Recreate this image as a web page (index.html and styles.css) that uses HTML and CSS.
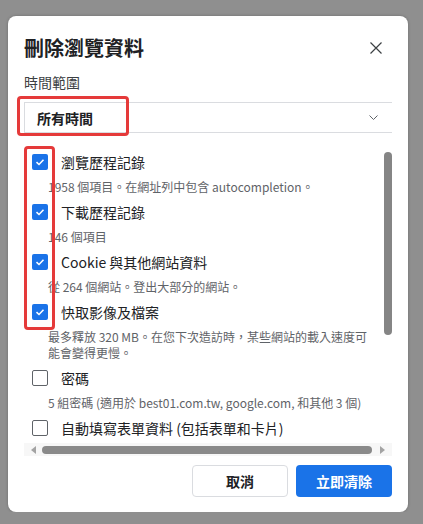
FILE: index.html
```html
<!DOCTYPE html>
<html lang="zh-Hant">
<head>
<meta charset="utf-8">
<link rel="stylesheet" href="styles.css">
</head>
<body>
<div class="dialog">
  <div class="header">
    <h1 class="title">刪除瀏覽資料</h1>
    <button class="close" aria-label="關閉">
      <svg width="12" height="12" viewBox="0 0 12 12"><path d="M0.5 0.5 L11.5 11.5 M11.5 0.5 L0.5 11.5" stroke="#3c4043" stroke-width="1.2" fill="none"/></svg>
    </button>
  </div>
  <div class="field-label">時間範圍</div>
  <div class="select-wrap">
    <div class="select">
      <span class="select-value">所有時間</span>
      <svg class="chevron" width="9" height="5" viewBox="0 0 9 5"><path d="M0.5 0.5 L4.5 4.5 L8.5 0.5" stroke="#5f6368" stroke-width="1" fill="none"/></svg>
    </div>
    <div class="mark mark-select"></div>
  </div>
  <div class="scroller">
    <div class="content">
      <div class="mark mark-checks"></div>
      <div class="item">
        <div class="row"><span class="cb on"><svg viewBox="0 0 16 16"><path d="M4.5 8.2 L7 10.5 L11.5 5.8" /></svg></span><span class="label">瀏覽歷程記錄</span></div>
        <div class="sub">1958 個項目。在網址列中包含 autocompletion。</div>
      </div>
      <div class="item">
        <div class="row"><span class="cb on"><svg viewBox="0 0 16 16"><path d="M4.5 8.2 L7 10.5 L11.5 5.8" /></svg></span><span class="label">下載歷程記錄</span></div>
        <div class="sub">146 個項目</div>
      </div>
      <div class="item">
        <div class="row"><span class="cb on"><svg viewBox="0 0 16 16"><path d="M4.5 8.2 L7 10.5 L11.5 5.8" /></svg></span><span class="label">Cookie 與其他網站資料</span></div>
        <div class="sub">從 264 個網站。登出大部分的網站。</div>
      </div>
      <div class="item">
        <div class="row"><span class="cb on"><svg viewBox="0 0 16 16"><path d="M4.5 8.2 L7 10.5 L11.5 5.8" /></svg></span><span class="label">快取影像及檔案</span></div>
        <div class="sub">最多釋放 320 MB。在您下次造訪時，某些網站的載入速度可<br>能會變得更慢。</div>
      </div>
      <div class="item">
        <div class="row"><span class="cb"></span><span class="label">密碼</span></div>
        <div class="sub">5 組密碼 (適用於 best01.com.tw, google.com, 和其他 3 個)</div>
      </div>
      <div class="item">
        <div class="row"><span class="cb"></span><span class="label">自動填寫表單資料 (包括表單和卡片)</span></div>
      </div>
    </div>
    <div class="vbar"><div class="vthumb"></div></div>
    <div class="hbar">
      <span class="harrow"><svg width="5" height="8" viewBox="0 0 5 8"><path d="M5 0 L0 4 L5 8 Z" fill="#a3a3a3"/></svg></span>
      <div class="hthumb"></div>
      <span class="harrow right"><svg width="5" height="8" viewBox="0 0 5 8"><path d="M0 0 L5 4 L0 8 Z" fill="#a3a3a3"/></svg></span>
    </div>
  </div>
  <div class="actions">
    <button class="btn cancel">取消</button>
    <button class="btn primary">立即清除</button>
  </div>
</div>
</body>
</html>
```
FILE: styles.css
```css
* { box-sizing: border-box; }
html, body { margin: 0; padding: 0; }
body {
  background: #8f8f8f;
  font-family: "Noto Sans CJK TC", "Noto Sans", sans-serif;
  color: #202124;
}
.dialog {
  margin: 16px 0 0 8px;
  width: 400px;
  height: 496px;
  background: #fff;
  border-radius: 8px;
  box-shadow: 0 0 3px rgba(0,0,0,0.25);
  padding: 16px 16px 15px 16px;
  display: flex;
  flex-direction: column;
}
.header {
  height: 32px;
  display: flex;
  align-items: center;
  justify-content: space-between;
}
.title {
  margin: 0;
  font-size: 20px;
  line-height: 28px;
  font-weight: 700;
  color: #202124;
}
.close {
  width: 32px;
  height: 32px;
  border: 0;
  background: none;
  padding: 0;
  display: flex;
  align-items: center;
  justify-content: center;
}
.field-label {
  margin-top: 8px;
  font-size: 14px;
  line-height: 20px;
  color: #3c4043;
}
.select-wrap {
  position: relative;
  margin-top: 10px;
}
.select {
  height: 31px;
  border: 1px solid #dadce0;
  border-right: 0;
  display: flex;
  align-items: center;
  justify-content: space-between;
  padding: 0 14px 0 12px;
}
.select-value {
  font-size: 14px;
  font-weight: 700;
  line-height: 20px;
}
.mark {
  position: absolute;
  border: 3px solid #e53a3a;
  border-radius: 4px;
  pointer-events: none;
}
.mark-select {
  left: -7px;
  top: -6px;
  width: 112px;
  height: 40px;
}
.scroller {
  margin-top: 9px;
  display: grid;
  grid-template-columns: 1fr 8px;
  grid-template-rows: 301px 13px;
}
.content {
  position: relative;
  overflow: hidden;
  padding: 8px 0 0 8px;
}
.mark-checks {
  left: 0;
  top: 4px;
  width: 31px;
  height: 184px;
  z-index: 2;
}
.item {
  padding-bottom: 5px;
}
.row {
  height: 24px;
  display: flex;
  align-items: center;
  gap: 13px;
}
.cb {
  width: 16px;
  height: 16px;
  flex: none;
  border-radius: 2px;
  border: 1.5px solid #5f6368;
  background: #fff;
}
.cb.on {
  border: 0;
  background: #1a73e8;
}
.cb svg {
  display: block;
  width: 16px;
  height: 16px;
}
.cb svg path {
  fill: none;
  stroke: #fff;
  stroke-width: 1.6;
}
.label {
  font-size: 14px;
  line-height: 20px;
  white-space: nowrap;
}
.sub {
  margin: 5px 0 0 16px;
  font-size: 12px;
  line-height: 16px;
  color: #5f6368;
  white-space: nowrap;
}
.vbar {
  padding-top: 10px;
}
.vthumb {
  height: 183px;
  background: #858585;
  border-radius: 4px;
}
.hbar {
  grid-column: 1 / span 2;
  background: #f7f7f7;
  display: flex;
  align-items: center;
}
.harrow {
  width: 18px;
  display: flex;
  justify-content: center;
  align-items: center;
}
.harrow.right { width: 20px; }
.hthumb {
  flex: 1;
  height: 8px;
  background: #8a8a8a;
  border-radius: 4px;
}
.actions {
  margin-top: 9px;
  display: flex;
  justify-content: flex-end;
  gap: 8px;
}
.btn {
  width: 96px;
  height: 32px;
  border-radius: 4px;
  font-family: inherit;
  font-size: 14px;
  font-weight: 700;
}
.cancel {
  background: #fff;
  border: 1px solid #dadce0;
  color: #202124;
}
.primary {
  background: #1a73e8;
  border: 0;
  color: #fff;
}
```
